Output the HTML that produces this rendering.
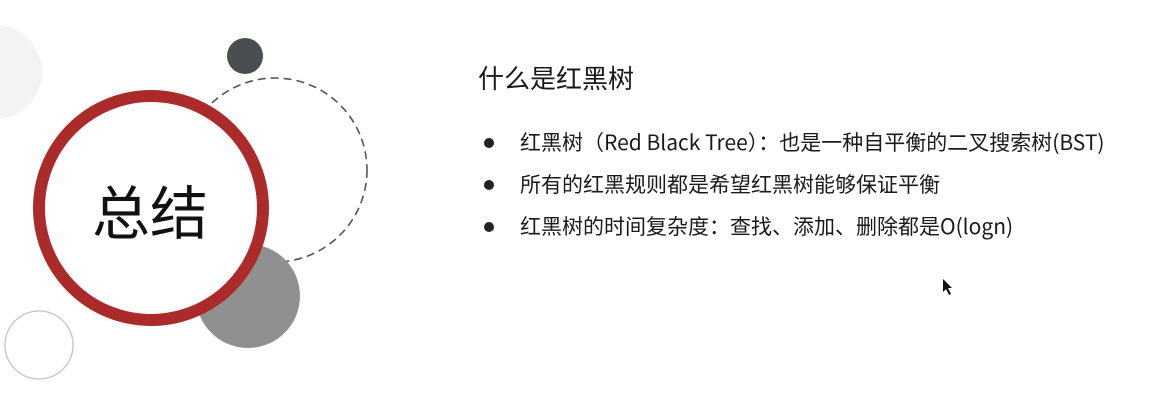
<!DOCTYPE html>
<html><head><meta charset="utf-8"><style>
html,body{margin:0;padding:0;background:#fff;width:1166px;height:401px;overflow:hidden;position:relative;font-family:"Liberation Sans","Noto Sans CJK SC",sans-serif;color:#1a1a1a}
.t{position:absolute;white-space:nowrap}
.b{position:absolute;left:484px;width:10px;height:10px;border-radius:50%;background:#222}
</style></head><body>
<svg width="1166" height="401" style="position:absolute;left:0;top:0">
<circle cx="-5" cy="72" r="47" fill="#f3f3f3"/>
<circle cx="245" cy="56" r="18" fill="#4a4e50"/>
<circle cx="275" cy="170" r="92" fill="none" stroke="#555" stroke-width="1.6" stroke-dasharray="8,5"/>
<circle cx="248" cy="296" r="52" fill="#909090"/>
<circle cx="39" cy="345" r="34" fill="none" stroke="#c4c4c4" stroke-width="1.3"/>
<circle cx="151" cy="208" r="112" fill="#fff" stroke="#ab2a2a" stroke-width="12"/>
<path d="M943 279 L943 292 L946 289 L949 295 L951 294 L948 288 L952 288 Z" fill="#111"/>
</svg>
<div class="t" style="left:92px;top:174px;font-size:58px;line-height:70px;font-family:'Noto Sans CJK SC',sans-serif;color:#111">总结</div>
<div class="t" style="left:478px;top:62px;font-size:26px;line-height:32px;font-family:'Noto Sans CJK SC',sans-serif">什么是红黑树</div>
<div class="b" style="top:138px"></div>
<div class="b" style="top:180px"></div>
<div class="b" style="top:222px"></div>
<div class="t" style="left:520px;top:128px;font-size:21px;line-height:28px;font-family:'Noto Sans CJK SC',sans-serif">红黑树（Red Black Tree）：也是一种自平衡的二叉搜索树(BST)</div>
<div class="t" style="left:520px;top:170px;font-size:21px;line-height:28px;font-family:'Noto Sans CJK SC',sans-serif">所有的红黑规则都是希望红黑树能够保证平衡</div>
<div class="t" style="left:520px;top:212px;font-size:21px;line-height:28px;font-family:'Noto Sans CJK SC',sans-serif">红黑树的时间复杂度：查找、添加、删除都是O(logn)</div>
</body></html>
